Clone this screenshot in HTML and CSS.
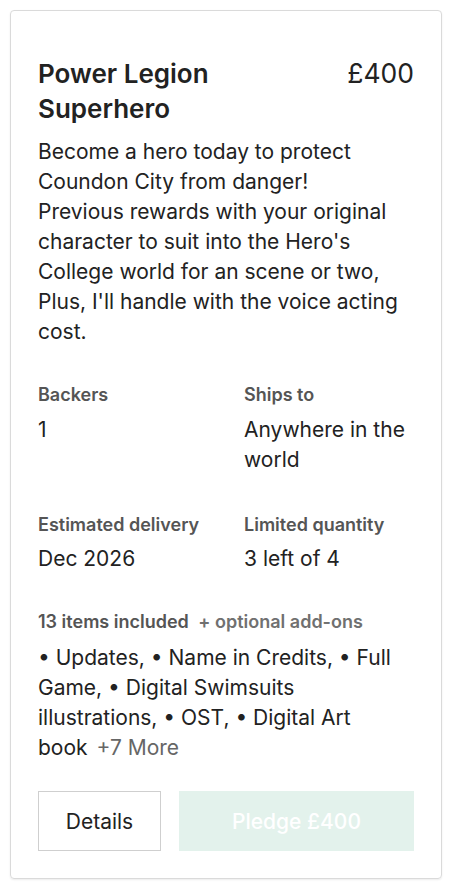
FILE: index.html
```html
<!DOCTYPE html>
<html lang="en">
<head>
<meta charset="utf-8">
<title>Reward</title>
<link rel="stylesheet" href="styles.css">
</head>
<body>
<div class="card">
  <div class="head">
    <h2 class="title">Power Legion Superhero</h2>
    <div class="price">£400</div>
  </div>
  <p class="desc">Become a hero today to protect Coundon City from danger!<br>Previous rewards with your original character to suit into the Hero's College world for an scene or two, Plus, I'll handle with the voice acting cost.</p>
  <div class="stats">
    <div class="stat">
      <div class="label">Backers</div>
      <div class="value">1</div>
    </div>
    <div class="stat">
      <div class="label">Ships to</div>
      <div class="value">Anywhere in the world</div>
    </div>
    <div class="stat">
      <div class="label">Estimated delivery</div>
      <div class="value">Dec 2026</div>
    </div>
    <div class="stat">
      <div class="label">Limited quantity</div>
      <div class="value">3 left of 4</div>
    </div>
  </div>
  <div class="items">
    <div class="label">13 items included <span class="addons">+ optional add-ons</span></div>
    <div class="value">• Updates, • Name in Credits, • Full Game, • Digital Swimsuits illustrations, • OST, • Digital Art <span class="tail">book <span class="more">+7 More</span></span></div>
  </div>
  <div class="actions">
    <button class="btn btn-details">Details</button>
    <button class="btn btn-pledge">Pledge £400</button>
  </div>
</div>
</body>
</html>
```
FILE: styles.css
```css
* { box-sizing: border-box; }
html, body { margin: 0; padding: 0; background: #fff; }
body {
  font-family: Inter, "Noto Sans", sans-serif;
  color: #222;
}
.card {
  margin: 10px;
  width: 432px;
  border: 1px solid #dadada;
  border-radius: 4px;
  box-shadow: 0 1px 2px rgba(0,0,0,0.08);
  padding: 45px 27px 27px;
}
.head {
  display: flex;
  justify-content: space-between;
  align-items: flex-start;
  gap: 16px;
}
.title {
  margin: 0;
  font-size: 26px;
  line-height: 35px;
  font-weight: 600;
  color: #222;
  max-width: 250px;
}
.price {
  font-size: 26.5px;
  line-height: 35px;
  font-weight: 400;
}
.desc {
  margin: 11px 0 0;
  font-size: 21px;
  line-height: 30px;
}
.stats {
  margin-top: 36px;
  display: grid;
  grid-template-columns: 1fr 1fr;
  column-gap: 36px;
  row-gap: 38px;
}
.label {
  font-size: 18px;
  line-height: 24px;
  font-weight: 600;
  color: #555;
}
.value {
  margin-top: 8px;
  font-size: 21px;
  line-height: 30px;
  color: #222;
}
.stat:nth-child(n+3) .value { margin-top: 7px; }
.items { margin-top: 36px; }
.items .value { margin-top: 9px; }
.addons {
  color: #707070;
  margin-left: 5px;
}
.tail { white-space: nowrap; }
.more { color: #666; margin-left: 3px; }
.actions {
  margin-top: 28px;
  display: flex;
  gap: 18px;
}
.btn {
  height: 60px;
  font-family: inherit;
  font-size: 21px;
  border-radius: 0;
  cursor: pointer;
}
.btn-details {
  width: 123px;
  background: #fff;
  border: 1px solid #cfcfcf;
  color: #222;
}
.btn-pledge {
  flex: 1;
  background: #e3f2ec;
  border: none;
  color: #fff;
  font-weight: 500;
}
```
